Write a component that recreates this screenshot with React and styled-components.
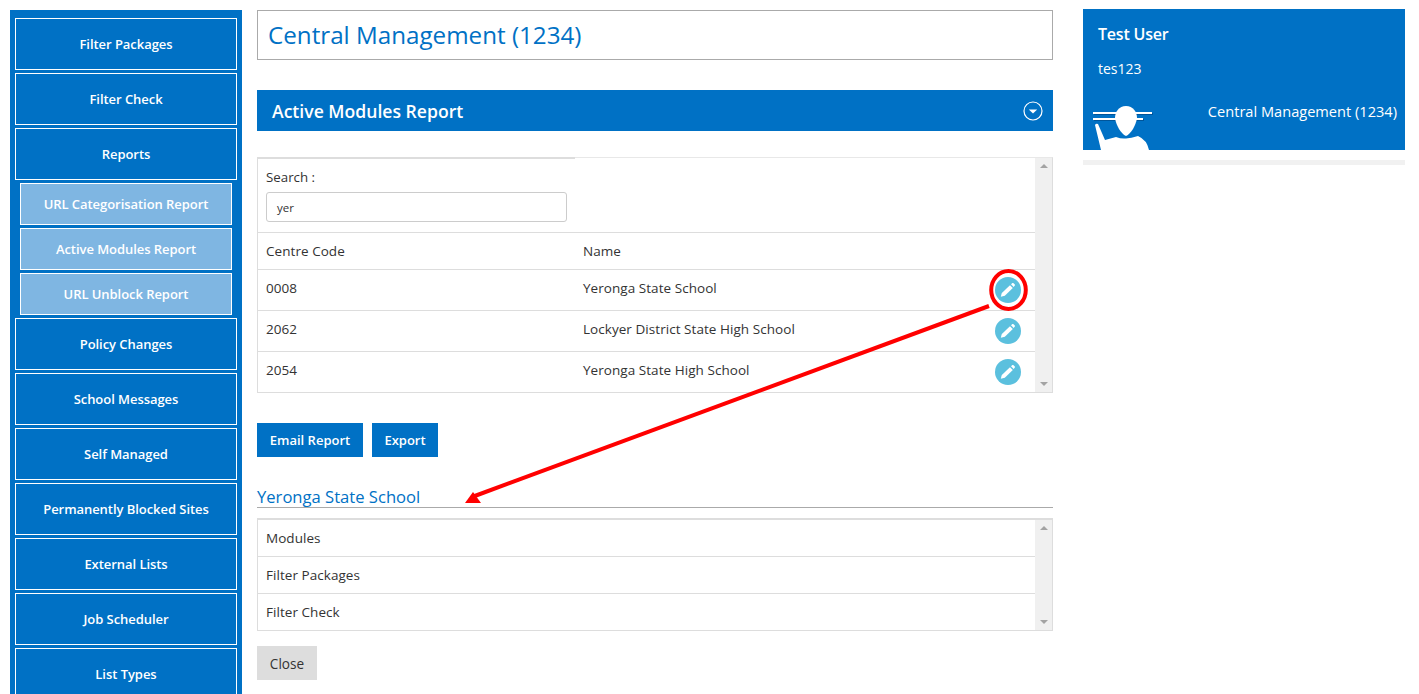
import React from 'react';
import styled, { createGlobalStyle } from 'styled-components';

const Global = createGlobalStyle`
  html, body { margin: 0; padding: 0; background: #fff; height: 694px; overflow: hidden; }
  body { font-family: "Open Sans", "Noto Sans", "Liberation Sans", sans-serif; color: #333; font-size: 13px; }
`;

const Page = styled.div`
  position: relative;
  display: flex;
  align-items: flex-start;
  width: 1419px;
  height: 694px;
  overflow: hidden;
`;
const Sidebar = styled.nav`
  width: 232px;
  height: 684px;
  margin: 10px 0 0 10px;
  padding: 8px 5px 0;
  box-sizing: border-box;
  background: #0071c5;
  display: flex;
  flex-direction: column;
  gap: 3px;
  flex: none;
  overflow: hidden;
`;
const NavButton = styled.div`
  height: ${p => (p.$sub ? 42 : 52)}px;
  margin: 0 ${p => (p.$sub ? 5 : 0)}px;
  flex: none;
  box-sizing: border-box;
  border: 1px solid #fff;
  background: ${p => (p.$sub ? '#7fb6e2' : '#0071c5')};
  color: #fff;
  font-weight: 600;
  font-size: 13px;
  letter-spacing: -0.05px;
  display: flex;
  align-items: center;
  justify-content: center;
`;
const Main = styled.main`
  width: 796px;
  margin: 10px 0 0 15px;
  flex: none;
  display: flex;
  flex-direction: column;
`;
const TitleBox = styled.div`
  height: 50px;
  box-sizing: border-box;
  border: 1px solid #aaa;
  padding: 0 10px 2px;
  display: flex;
  align-items: center;
  color: #0071c5;
  font-size: 24.2px;
`;
const SectionBar = styled.div`
  height: 41px;
  margin-top: 30px;
  padding: 0 10px 0 15px;
  background: #0071c5;
  color: #fff;
  font-size: 17.6px;
  font-weight: 600;
  display: flex;
  align-items: center;
  justify-content: space-between;
`;
const Panel = styled.div`
  position: relative;
  box-sizing: border-box;
  border: 1px solid #ddd;
  border-top: ${p => (p.$flatTop ? '1px solid #e8e8e8' : '2px solid #ddd')};
  padding-right: 17px;
  margin-top: ${p => p.$top}px;
  height: ${p => p.$height}px;
`;
const TopRule = styled.div`
  position: absolute;
  left: -1px;
  top: -1px;
  width: 318px;
  height: 2px;
  background: #ddd;
`;
const Scrollbar = styled.div`
  position: absolute;
  right: 0;
  top: 0;
  bottom: 0;
  width: 17px;
  background: #f0f0f0;
  display: flex;
  flex-direction: column;
  justify-content: space-between;
  align-items: center;
  padding: 6px 0;
  box-sizing: border-box;
`;
const Arrow = styled.span`
  width: 0;
  height: 0;
  border-left: 4px solid transparent;
  border-right: 4px solid transparent;
  ${p => (p.$down ? 'border-top: 4px solid #a3a3a3;' : 'border-bottom: 4px solid #a3a3a3;')}
`;
const SearchBlock = styled.div`
  height: 75px;
  box-sizing: border-box;
  padding: 10px 8px 0;
  border-bottom: 1px solid #ddd;
`;
const SearchLabel = styled.div`
  line-height: 18px;
  font-size: 13.3px;
`;
const SearchInput = styled.div`
  width: 301px;
  height: 30px;
  margin-top: 6px;
  box-sizing: border-box;
  border: 1px solid #ccc;
  border-radius: 3px;
  padding: 0 10px;
  font-size: 11.5px;
  display: flex;
  align-items: center;
`;
const Row = styled.div`
  display: grid;
  grid-template-columns: 317px 1fr 40px;
  align-items: center;
  box-sizing: border-box;
  height: ${p => p.$height}px;
  padding-left: 8px;
  border-bottom: ${p => (p.$last ? 'none' : '1px solid #ddd')};
  font-size: 13.5px;
  letter-spacing: 0.05px;
`;
const CellText = styled.span`
  position: relative;
  top: ${p => p.$shift || 0}px;
`;
const EditButton = styled.span`
  width: 26px;
  height: 26px;
  border-radius: 50%;
  background: #5bc0de;
  display: flex;
  align-items: center;
  justify-content: center;
`;
const Actions = styled.div`
  display: flex;
  gap: 9px;
  margin-top: 30px;
`;
const ActionButton = styled.div`
  height: 34px;
  width: ${p => p.$width}px;
  display: flex;
  align-items: center;
  justify-content: center;
  background: ${p => (p.$grey ? '#ddd' : '#0071c5')};
  color: ${p => (p.$grey ? '#333' : '#fff')};
  font-weight: ${p => (p.$grey ? 400 : 600)};
  font-size: ${p => (p.$grey ? 13.6 : 13)}px;
`;
const SubHeading = styled.div`
  margin-top: 28px;
  height: 23px;
  line-height: 24px;
  box-sizing: border-box;
  border-bottom: 1px solid #aaa;
  color: #0071c5;
  font-size: 16.6px;
  font-weight: 500;
`;
const CloseRow = styled.div`
  display: flex;
  margin-top: 15px;
`;
const Aside = styled.aside`
  width: 322px;
  margin: 9px 0 0 30px;
  flex: none;
`;
const UserCard = styled.div`
  position: relative;
  height: 141px;
  background: #0071c5;
  color: #fff;
  overflow: hidden;
`;
const UserName = styled.div`
  position: absolute;
  left: 15px;
  top: 14px;
  font-size: 16px;
  font-weight: 600;
  letter-spacing: -0.2px;
`;
const UserId = styled.div`
  position: absolute;
  left: 15px;
  top: 50px;
  font-size: 14px;
`;
const UserOrg = styled.div`
  position: absolute;
  right: 8px;
  top: 92px;
  font-size: 14.6px;
`;
const Avatar = styled.svg`
  position: absolute;
  left: 10px;
  top: 95px;
`;
const Stripe = styled.div`
  height: 5px;
  margin-top: 10px;
  background: #f1f1f1;
`;
const Overlay = styled.svg`
  position: absolute;
  left: 0;
  top: 0;
  pointer-events: none;
`;

const Pencil = () => (
  <svg width="18" height="18" viewBox="0 0 18 18">
    <path d="M1.8 15.8 L2.8 12 L11 4.2 L13.8 7 L5.8 14.8 Z" fill="#fff" />
    <path d="M12 3.3 L13.4 2.1 Q14 1.7 14.6 2.2 L15.8 3.4 Q16.3 4 15.8 4.6 L14.7 6 Z" fill="#fff" />
  </svg>
);

const nav = [
  ['Filter Packages'], ['Filter Check'], ['Reports'],
  ['URL Categorisation Report', 1], ['Active Modules Report', 1], ['URL Unblock Report', 1],
  ['Policy Changes'], ['School Messages'], ['Self Managed'], ['Permanently Blocked Sites'],
  ['External Lists'], ['Job Scheduler'], ['List Types'],
];
const rows = [
  ['0008', 'Yeronga State School'],
  ['2062', 'Lockyer District State High School'],
  ['2054', 'Yeronga State High School'],
];
const modules = ['Modules', 'Filter Packages', 'Filter Check'];

export default function App() {
  return (
    <Page>
      <Global />
      <Sidebar>
        {nav.map(([label, sub]) => (
          <NavButton key={label} $sub={sub}>{label}</NavButton>
        ))}
      </Sidebar>
      <Main>
        <TitleBox>Central Management (1234)</TitleBox>
        <SectionBar>
          Active Modules Report
          <svg width="20" height="20" viewBox="0 0 20 20">
            <circle cx="10" cy="10" r="9" fill="none" stroke="#fff" strokeWidth="1.2" />
            <path d="M5.8 8.5 H14.2 L10 12.6 Z" fill="#fff" />
          </svg>
        </SectionBar>
        <Panel $top={26} $height={236} $flatTop>
          <TopRule />
          <SearchBlock>
            <SearchLabel>Search :</SearchLabel>
            <SearchInput>yer</SearchInput>
          </SearchBlock>
          <Row $height={37}>
            <span>Centre Code</span>
            <span>Name</span>
          </Row>
          {rows.map(([code, name], i) => {
            const last = i === rows.length - 1;
            return (
              <Row key={code} $height={last ? 40 : 41} $last={last}>
                <CellText $shift={-2}>{code}</CellText>
                <CellText $shift={-2}>{name}</CellText>
                <EditButton><Pencil /></EditButton>
              </Row>
            );
          })}
          <Scrollbar><Arrow /><Arrow $down /></Scrollbar>
        </Panel>
        <Actions>
          <ActionButton $width={106}>Email Report</ActionButton>
          <ActionButton $width={66}>Export</ActionButton>
        </Actions>
        <SubHeading>Yeronga State School</SubHeading>
        <Panel $top={10} $height={113}>
          {modules.map((m, i) => {
            const last = i === modules.length - 1;
            return (
              <Row key={m} $height={last ? 36 : 37} $last={last}>
                <span>{m}</span>
              </Row>
            );
          })}
          <Scrollbar><Arrow /><Arrow $down /></Scrollbar>
        </Panel>
        <CloseRow><ActionButton $grey $width={60}>Close</ActionButton></CloseRow>
      </Main>
      <Aside>
        <UserCard>
          <UserName>Test User</UserName>
          <UserId>tes123</UserId>
          <UserOrg>Central Management (1234)</UserOrg>
          <Avatar width="62" height="46" viewBox="0 0 62 46">
            <path d="M1 9H60V11H1Z M1 15H51V17H1Z" fill="#00559a" />
            <path d="M0 8H59V10H0Z M0 14H50V16H0Z" fill="#fff" />
            <path d="M33 2 C40 2 44 8 44 14 C43 21 38 30 33 32 C28 30 23 21 22 14 C22 8 26 2 33 2Z" fill="#fff" />
            <path d="M2 21 Q3 19 5 20 L12 36 L23 33 Q28 35 33 34.5 Q38 34 45 32 Q54 36 56 46 H8 Z" fill="#fff" />
          </Avatar>
        </UserCard>
        <Stripe />
      </Aside>
      <Overlay width="1419" height="694" viewBox="0 0 1419 694">
        <ellipse cx="1008.5" cy="290" rx="17.3" ry="19" fill="none" stroke="#f00" strokeWidth="4" />
        <path d="M989 306 L472 497" stroke="#f00" strokeWidth="4" fill="none" />
        <path d="M465 503 L473 492 L481 503 Z" fill="#f00" />
      </Overlay>
    </Page>
  );
}
